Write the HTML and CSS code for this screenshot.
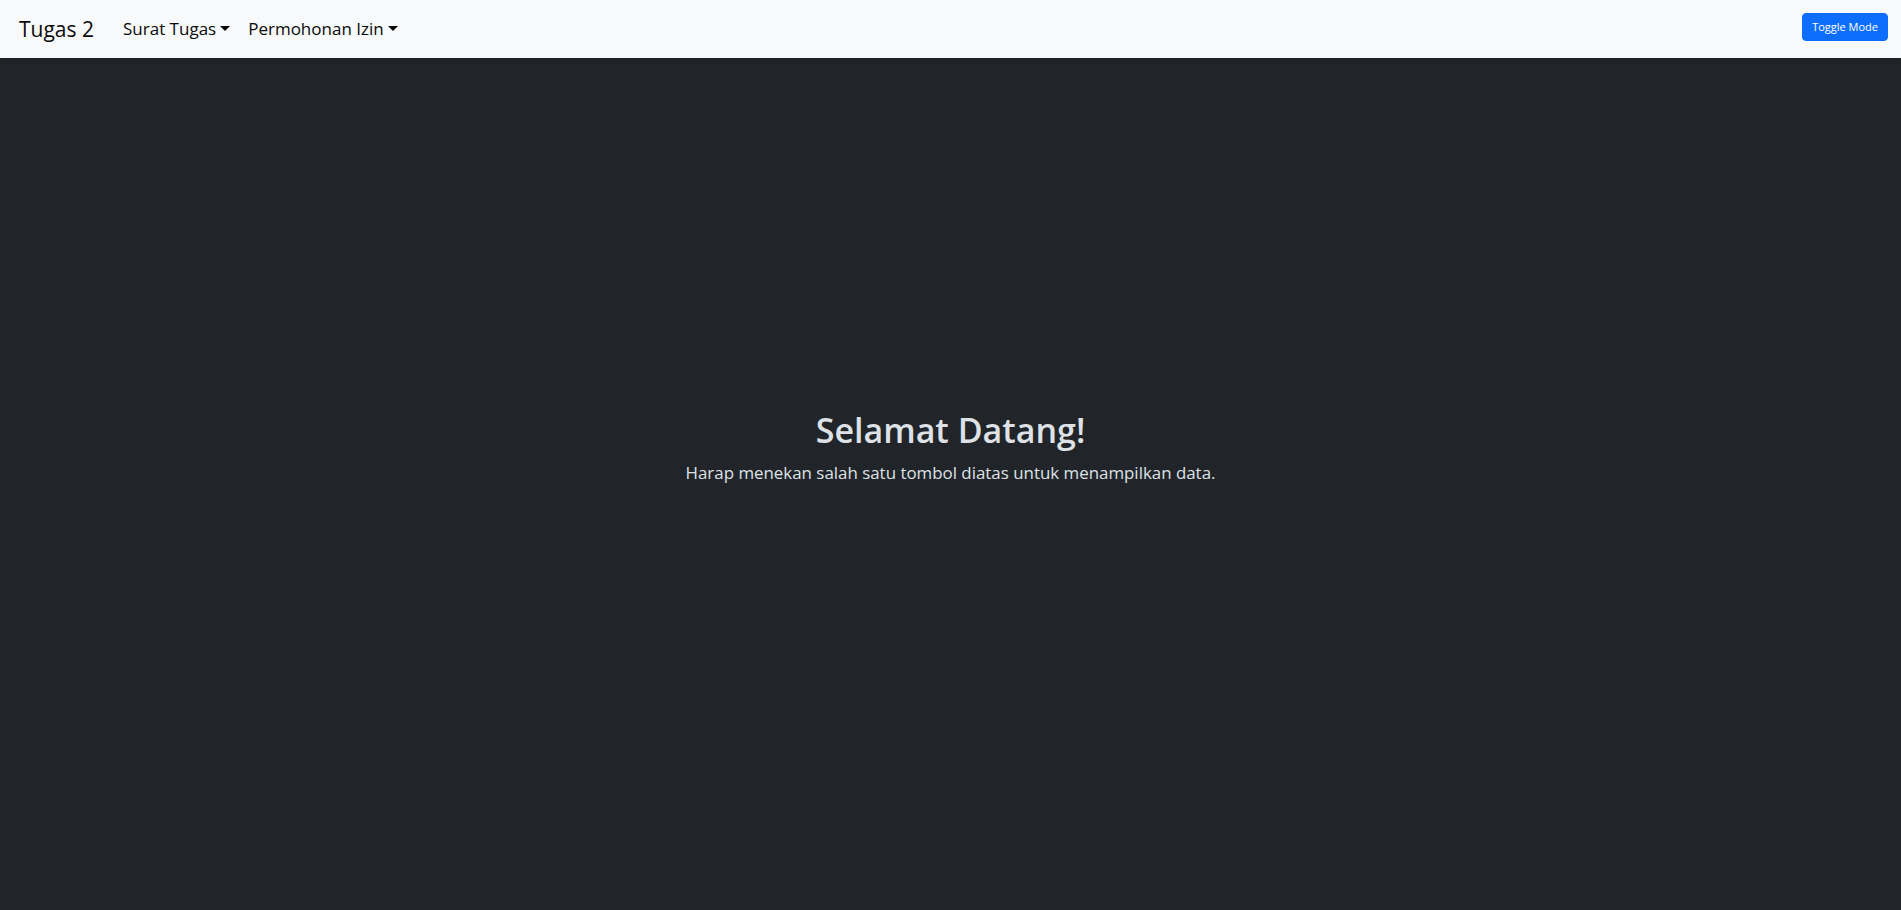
FILE: index.html
```html
<!DOCTYPE html>
<html lang="id">
<head>
<meta charset="utf-8">
<title>Tugas 2</title>
<link rel="stylesheet" href="styles.css">
</head>
<body>
<nav class="navbar">
  <div class="navbar-left">
    <a class="brand" href="#">Tugas 2</a>
    <ul class="nav">
      <li><a class="nav-link" href="#">Surat Tugas<span class="caret"></span></a></li>
      <li><a class="nav-link" href="#">Permohonan Izin<span class="caret"></span></a></li>
    </ul>
  </div>
  <button class="btn-toggle" type="button">Toggle Mode</button>
</nav>
<main class="main">
  <div class="welcome">
    <h2 class="title">Selamat Datang!</h2>
    <p class="lead">Harap menekan salah satu tombol diatas untuk menampilkan data.</p>
  </div>
</main>
</body>
</html>
```
FILE: styles.css
```css
* { box-sizing: border-box; }
html, body { margin: 0; padding: 0; height: 100%; }
body {
  font-family: "Open Sans", "Noto Sans", sans-serif;
  background: #212529;
  color: #dee2e6;
  display: flex;
  flex-direction: column;
  min-height: 100vh;
}
.navbar {
  height: 58px;
  background: #f8f9fa;
  display: flex;
  align-items: center;
  justify-content: space-between;
  padding: 0 13px 0 19px;
  box-shadow: 0 2px 4px rgba(0,0,0,0.15);
  flex: none;
}
.navbar-left { display: flex; align-items: center; }
.brand {
  font-size: 21px;
  color: #0a0a0a;
  text-decoration: none;
  margin-right: 20px;
  line-height: 30px;
}
.nav { list-style: none; margin: 0; padding: 0; display: flex; }
.nav-link {
  display: block;
  padding: 8px 9px;
  font-size: 17px;
  line-height: 24px;
  color: #0a0a0a;
  text-decoration: none;
}
.caret {
  display: inline-block;
  margin-left: 4px;
  vertical-align: 4px;
  border-top: 5px solid;
  border-right: 5px solid transparent;
  border-left: 5px solid transparent;
}
.btn-toggle {
  font-family: inherit;
  font-size: 11px;
  line-height: 16px;
  color: #fff;
  background: #0d6efd;
  border: 1px solid #0d6efd;
  border-radius: 4px;
  padding: 5px 9px;
  height: 28px;
  margin-bottom: 4px;
}
.main {
  flex: 1;
  display: flex;
  align-items: center;
  justify-content: center;
  padding-bottom: 58px;
}
.welcome { text-align: center; }
.title {
  font-size: 34px;
  font-weight: 600;
  line-height: 40px;
  margin: 0 0 10px;
  color: #dee2e6;
}
.lead {
  font-size: 16.9px;
  line-height: 25px;
  margin: 0 0 16px;
  color: #dee2e6;
}
```
